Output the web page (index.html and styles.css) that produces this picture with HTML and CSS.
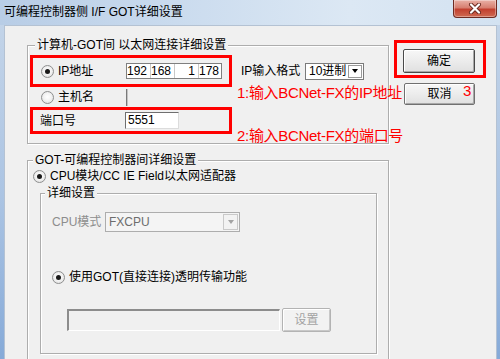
FILE: index.html
```html
<!DOCTYPE html>
<html lang="zh-CN">
<head>
<meta charset="utf-8">
<title>可编程控制器侧 I/F GOT详细设置</title>
<link rel="stylesheet" href="styles.css">
</head>
<body>
<div class="window">
  <div class="titlebar">
    <span class="title">可编程控制器侧 I/F GOT详细设置</span>
    <div class="close">
      <svg width="14" height="11" viewBox="0 0 14 11">
        <path d="M3 1.5 L11 9.5 M11 1.5 L3 9.5" stroke="#6a2a20" stroke-width="4" stroke-linecap="round"/>
        <path d="M3 1.5 L11 9.5 M11 1.5 L3 9.5" stroke="#ffffff" stroke-width="2.2" stroke-linecap="round"/>
      </svg>
    </div>
  </div>
  <div class="frame">
    <div class="client">
      <div class="left">
        <div class="group g1">
          <span class="gtitle">计算机-GOT间 以太网连接详细设置</span>
          <div class="r-ip">
            <div class="mark box-ip">
              <span class="radio on"></span>
              <span class="rlabel">IP地址</span>
              <div class="ipf"><span>192</span><span>168</span><span>1</span><span>178</span></div>
            </div>
            <span class="fmt">IP输入格式</span>
            <div class="select"><span class="val">10进制</span><span class="dd"><i class="tri"></i></span></div>
          </div>
          <div class="r-host">
            <span class="radio"></span>
            <span class="rlabel">主机名</span>
            <span class="hostf"></span>
          </div>
          <div class="mark box-port">
            <span class="plabel">端口号</span>
            <span class="field">5551</span>
          </div>
          <span class="note n1">1:输入BCNet-FX的IP地址</span>
          <span class="note n2">2:输入BCNet-FX的端口号</span>
        </div>
        <div class="group g2">
          <span class="gtitle t2">GOT-可编程控制器间详细设置</span>
          <div class="r-cpu">
            <span class="radio on"></span>
            <span class="cpulabel">CPU模块/CC IE Field以太网适配器</span>
          </div>
          <div class="group g3">
            <span class="gtitle t3">详细设置</span>
            <div class="r-mode">
              <span class="mlabel">CPU模式</span>
              <div class="combo"><span class="val">FXCPU</span><span class="dd"><i class="tri gray"></i></span></div>
            </div>
            <div class="r-trans">
              <span class="radio on"></span>
              <span class="tlabel">使用GOT(直接连接)透明传输功能</span>
            </div>
            <div class="r-set">
              <span class="dfield"></span>
              <button class="btn dis">设置</button>
            </div>
          </div>
        </div>
      </div>
      <div class="right">
        <div class="mark box-ok"><button class="btn def">确定</button></div>
        <button class="btn cancel">取消</button>
        <span class="note n3">3</span>
      </div>
    </div>
  </div>
</div>
</body>
</html>
```
FILE: styles.css
```css
* { box-sizing: border-box; }
html, body { margin: 0; padding: 0; }
body {
  width: 500px;
  height: 359px;
  overflow: hidden;
  font-family: "Liberation Sans", "Noto Sans CJK SC", sans-serif;
  font-size: 12px;
  color: #000;
  background: #9dbbe0;
}
.window {
  width: 500px;
  height: 359px;
  display: flex;
  flex-direction: column;
  overflow: hidden;
  background: linear-gradient(to bottom, #c6d6e9 0%, #abc4e3 55%, #86aad8 100%);
}
.titlebar {
  height: 25px;
  flex: none;
  display: flex;
  align-items: flex-start;
  background: linear-gradient(to right, #b8cde6 0%, #cadbee 35%, #dce8f4 70%, #d3e2f1 100%);
}
.title {
  padding-left: 4px;
  margin-top: 5px;
  line-height: 14px;
  white-space: nowrap;
}
.close {
  margin-left: auto;
  margin-right: 3px;
  width: 44px;
  height: 18px;
  border: 1px solid #6e2b22;
  border-top: none;
  border-radius: 0 0 4px 4px;
  background: linear-gradient(to bottom, #e9b1a6 0%, #d77f70 45%, #c2402f 55%, #cf6a52 100%);
  display: flex;
  align-items: center;
  justify-content: center;
  box-shadow: inset 0 0 0 1px rgba(255,255,255,0.35);
}
.frame {
  flex: 1;
  min-height: 0;
  display: flex;
  padding: 0 3px 0 4px;
}
.client {
  flex: 1;
  display: flex;
  align-items: flex-start;
  overflow: hidden;
  background: #f0f0f0;
  border-top: 1px solid #b4c2d3;
  border-left: 1px solid #b4c2d3;
  border-right: 1px solid #b4c2d3;
}
.left {
  width: 384px;
  flex: none;
  padding-left: 22px;
}
.group {
  position: relative;
  border: 1px solid #adadad;
  box-shadow: 1px 1px 0 #ffffff, inset 1px 1px 0 #ffffff;
}
.gtitle {
  position: absolute;
  top: -8px;
  left: 7px;
  padding: 0 2px;
  line-height: 14px;
  background: #f0f0f0;
  white-space: nowrap;
}
.g1 {
  width: 362px;
  margin-top: 19px;
  padding: 9px 0 9px 2px;
}
.mark { border: 3px solid #ff0000; }
.r-ip {
  display: flex;
  align-items: center;
}
.box-ip {
  width: 202px;
  height: 32px;
  display: flex;
  align-items: center;
  padding-left: 8px;
}
.radio {
  position: relative;
  flex: none;
  width: 13px;
  height: 13px;
  border-radius: 50%;
  border: 1px solid #8e8f8f;
  background: radial-gradient(circle at 50% 45%, #ffffff 0%, #f3f3f3 45%, #d8d8d8 100%);
}
.radio.on::after {
  content: "";
  position: absolute;
  left: 3px;
  top: 3px;
  width: 5px;
  height: 5px;
  border-radius: 50%;
  background: #1a1a1a;
}
.rlabel {
  width: 68px;
  margin-left: 4px;
  line-height: 14px;
  white-space: nowrap;
}
.ipf {
  display: flex;
  width: 96px;
  height: 16px;
  border: 1px solid #7f7f7f;
  background: #ffffff;
}
.ipf span {
  width: 24px;
  line-height: 14px;
  text-align: right;
  padding-right: 3px;
  border-right: 1px solid #c8c8c8;
}
.ipf span:last-child {
  width: 22px;
  border-right: none;
  padding-right: 2px;
}
.fmt {
  width: 56px;
  margin-left: 9px;
  line-height: 14px;
  white-space: nowrap;
}
.select {
  width: 59px;
  height: 17px;
  margin-left: 8px;
  display: flex;
  align-items: center;
  border: 1px solid #7a7a7a;
  background: #ffffff;
}
.val {
  flex: 1;
  padding-left: 3px;
  line-height: 14px;
  white-space: nowrap;
}
.dd {
  width: 14px;
  height: 13px;
  margin-right: 1px;
  display: flex;
  align-items: center;
  justify-content: center;
  border: 1px solid #9a9a9a;
  background: #ffffff;
}
.tri {
  width: 0;
  height: 0;
  border-left: 3.5px solid transparent;
  border-right: 3.5px solid transparent;
  border-top: 4px solid #000000;
}
.tri.gray { border-top-color: #a3a3a3; }
.r-host {
  height: 20px;
  display: flex;
  align-items: center;
  padding-left: 11px;
}
.hostf {
  width: 2px;
  height: 17px;
  border-left: 1px solid #7a7a7a;
  border-right: 1px solid #c4c4c4;
}
.box-port {
  width: 202px;
  height: 27px;
  display: flex;
  align-items: center;
  padding-left: 7px;
}
.plabel {
  width: 85px;
  line-height: 14px;
}
.field {
  width: 54px;
  height: 17px;
  padding-left: 2px;
  line-height: 15px;
  background: #ffffff;
  border-top: 1px solid #6f6f6f;
  border-left: 1px solid #6f6f6f;
  border-right: 1px solid #dcdcdc;
  border-bottom: 1px solid #dcdcdc;
}
.note {
  position: absolute;
  color: #ff0000;
  font-size: 15px;
  line-height: 15px;
  letter-spacing: -0.3px;
  white-space: nowrap;
}
.n1 { left: 209px; top: 39px; }
.n2 { left: 209px; top: 82px; }
.g2 {
  width: 362px;
  margin-top: 16px;
  padding: 7px 0 12px 0;
}
.t2 { left: 5px; }
.r-cpu {
  height: 16px;
  display: flex;
  align-items: center;
  padding-left: 5px;
}
.cpulabel {
  margin-left: 4px;
  line-height: 14px;
  white-space: nowrap;
}
.g3 {
  margin: 9px 11px 0 12px;
  padding: 18px 0 21px 0;
}
.t3 { left: 4px; }
.r-mode {
  height: 20px;
  display: flex;
  align-items: center;
  padding-left: 11px;
}
.mlabel {
  width: 53px;
  color: #8d8d8d;
  line-height: 14px;
  white-space: nowrap;
}
.combo {
  width: 135px;
  height: 20px;
  display: flex;
  align-items: center;
  border: 1px solid #adadad;
  background: #f4f4f4;
  color: #6d6d6d;
}
.combo .dd {
  width: 15px;
  height: 16px;
  border-color: #c9c9c9;
  background: #f2f2f2;
}
.r-trans {
  height: 16px;
  margin-top: 37px;
  display: flex;
  align-items: center;
  padding-left: 11px;
}
.tlabel {
  margin-left: 4px;
  line-height: 14px;
  white-space: nowrap;
}
.r-set {
  margin-top: 23px;
  display: flex;
  align-items: flex-start;
  padding-left: 26px;
}
.dfield {
  width: 213px;
  height: 22px;
  margin-top: 1px;
  background: #f0f0f0;
  border-top: 2px solid #8c8c8c;
  border-left: 2px solid #8c8c8c;
  border-right: 1px solid #ffffff;
  border-bottom: 1px solid #ffffff;
}
.btn {
  font-family: "Liberation Sans", "Noto Sans CJK SC", sans-serif;
  font-size: 12px;
  color: #000;
  padding: 0;
  line-height: 14px;
  border: 1px solid #707070;
  border-radius: 2px;
  background: linear-gradient(to bottom, #f7f7f7 0%, #ececec 50%, #e0e0e0 100%);
  box-shadow: inset 1px 1px 0 #ffffff, inset -1px -1px 0 #a8a8a8;
}
.btn.dis {
  width: 49px;
  height: 24px;
  margin-left: 2px;
  color: #a3a3a3;
  border-color: #b3b3b3;
  background: #f2f2f2;
  box-shadow: inset 1px 1px 0 #ffffff, inset -1px -1px 0 #c8c8c8;
}
.right {
  position: relative;
  width: 100px;
  flex: none;
  margin-left: 5px;
  padding-top: 14px;
}
.box-ok {
  width: 92px;
  height: 38px;
  padding: 6px 0 0 6px;
}
.btn.def {
  width: 72px;
  height: 24px;
  border-color: #4a4a4a;
}
.btn.cancel {
  display: block;
  width: 71px;
  height: 22px;
  margin: 5px 0 0 10px;
}
.n3 { left: 69px; top: 57px; letter-spacing: 0; }
```
